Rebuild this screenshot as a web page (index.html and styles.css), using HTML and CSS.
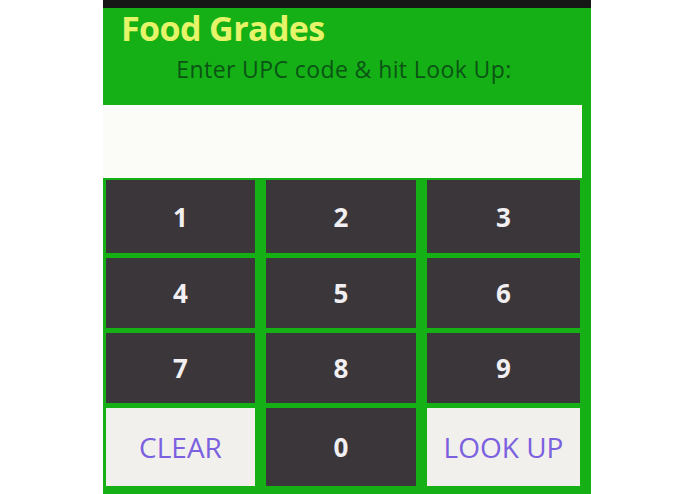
FILE: index.html
```html
<!DOCTYPE html>
<html>
<head>
  <title>Food Grades</title>
  <link rel="stylesheet" href="styles.css">
</head>
<body>
  <div class="screen">
    <h1 class="title">Food Grades</h1>
    <p class="hint">Enter UPC code &amp; hit Look Up:</p>
    <input type="text" class="upc-input" id="upc">
    <div class="keypad">
      <button class="key">1</button>
      <button class="key">2</button>
      <button class="key">3</button>
      <button class="key">4</button>
      <button class="key">5</button>
      <button class="key">6</button>
      <button class="key">7</button>
      <button class="key">8</button>
      <button class="key">9</button>
      <button class="key key-action">CLEAR</button>
      <button class="key">0</button>
      <button class="key key-action">LOOK UP</button>
    </div>
  </div>
</body>
</html>
```

FILE: styles.css
```css
body {
  margin: 0;
  background-color: #fff;
  font-family: "Open Sans", "DejaVu Sans", sans-serif;
}

.screen {
  box-sizing: border-box;
  width: 488px;
  height: 494px;
  margin-left: 103px;
  background-color: #15b015;
  border-top: 8px solid #161616;
  overflow: hidden;
}

.title {
  margin: 0;
  padding-left: 18px;
  height: 48px;
  font-size: 34px;
  font-weight: bold;
  line-height: 40px;
  letter-spacing: -0.6px;
  color: #e6f46a;
}

.hint {
  margin: 0;
  height: 30px;
  padding-right: 6px;
  font-size: 23px;
  line-height: 26px;
  text-align: center;
  letter-spacing: 0.4px;
  color: #0b5416;
}

.upc-input {
  display: block;
  box-sizing: border-box;
  width: 479px;
  height: 73px;
  margin: 19px 0 0 0;
  border: none;
  background-color: #fbfbf8;
}

/* Keypad */
.keypad {
  display: grid;
  grid-template-columns: 149px 150px 153px;
  grid-template-rows: 73px 70px 70px 78px;
  column-gap: 11px;
  row-gap: 5px;
  margin: 2px 0 0 3px;
}

.key {
  border: none;
  background-color: #3b3639;
  color: #f2eff2;
  font-family: "Open Sans", "DejaVu Sans", sans-serif;
  font-size: 26px;
  font-weight: bold;
  padding: 0;
}

.key-action {
  background-color: #f2f0ec;
  color: #7b61df;
  font-weight: normal;
  font-size: 28px;
}
```
